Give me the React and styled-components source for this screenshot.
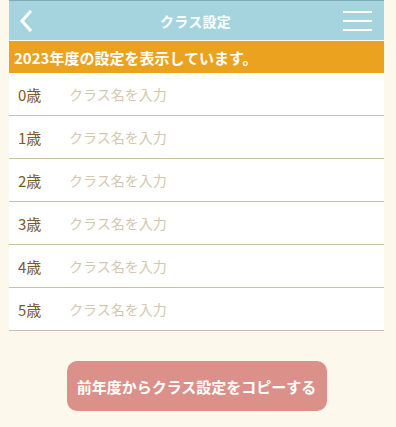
import React from 'react';
import styled, { createGlobalStyle } from 'styled-components';

const GlobalStyle = createGlobalStyle`
  html, body {
    margin: 0;
    padding: 0;
    background: #fdf8ec;
  }
  body {
    font-family: "Noto Sans CJK JP", "Noto Sans", sans-serif;
  }
`;

const Page = styled.div`
  width: 375px;
  margin: 0 0 0 9px;
  min-height: 427px;
`;

const Header = styled.header`
  height: 40px;
  box-sizing: border-box;
  border-top: 1px solid #7eaab5;
  background: #a5d4df;
  display: flex;
  align-items: center;
  justify-content: space-between;
  padding: 0 12px 0 10px;
  color: #fff;
`;

const Title = styled.h1`
  margin: 0;
  font-size: 14px;
  font-weight: 700;
  letter-spacing: 0.3px;
`;

const IconButton = styled.button`
  background: none;
  border: 0;
  padding: 0;
  width: 30px;
  height: 30px;
  display: flex;
  align-items: center;
  justify-content: ${p => (p.$end ? 'flex-end' : 'flex-start')};
`;

const Banner = styled.div`
  margin-top: 1px;
  height: 32px;
  background: #eba21e;
  color: #fff;
  font-size: 15px;
  font-weight: 700;
  display: flex;
  align-items: center;
  padding-left: 5px;
`;

const List = styled.ul`
  list-style: none;
  margin: 0;
  padding: 0;
  background: #fff;
`;

const Row = styled.li`
  height: 42px;
  border-bottom: 1px solid #cbc1a3;
  display: flex;
  align-items: center;
  padding-left: 9px;
`;

const Age = styled.span`
  width: 51px;
  font-size: 15px;
  color: #7b5b1f;
`;

const NameInput = styled.input`
  flex: 1;
  border: 0;
  outline: none;
  background: transparent;
  font-family: inherit;
  font-size: 14px;
  color: #7b5b1f;
  padding: 0;
  &::placeholder {
    color: #d3c8ad;
  }
`;

const Footer = styled.div`
  display: flex;
  justify-content: center;
  padding-top: 30px;
`;

const CopyButton = styled.button`
  width: 260px;
  height: 50px;
  border: 0;
  border-radius: 10px;
  background: #db918a;
  color: #fff;
  font-family: inherit;
  font-size: 15px;
  font-weight: 700;
  padding: 0;
`;

const ages = [0, 1, 2, 3, 4, 5];

export default function App() {
  return (
    <>
      <GlobalStyle />
      <Page>
        <Header>
          <IconButton aria-label="戻る">
            <svg width="14" height="22" viewBox="0 0 14 22">
              <path d="M11 2 L3 11 L11 20" fill="none" stroke="#fff" strokeWidth="3" strokeLinecap="square" />
            </svg>
          </IconButton>
          <Title>クラス設定</Title>
          <IconButton $end aria-label="メニュー">
            <svg width="30" height="22" viewBox="0 0 30 22">
              <rect x="1" y="1" width="29" height="2" fill="#fff" />
              <rect x="1" y="10" width="29" height="2" fill="#fff" />
              <rect x="1" y="19" width="29" height="2" fill="#fff" />
            </svg>
          </IconButton>
        </Header>
        <Banner>2023年度の設定を表示しています。</Banner>
        <List>
          {ages.map(a => (
            <Row key={a}>
              <Age>{a}歳</Age>
              <NameInput placeholder="クラス名を入力" />
            </Row>
          ))}
        </List>
        <Footer>
          <CopyButton>前年度からクラス設定をコピーする</CopyButton>
        </Footer>
      </Page>
    </>
  );
}
